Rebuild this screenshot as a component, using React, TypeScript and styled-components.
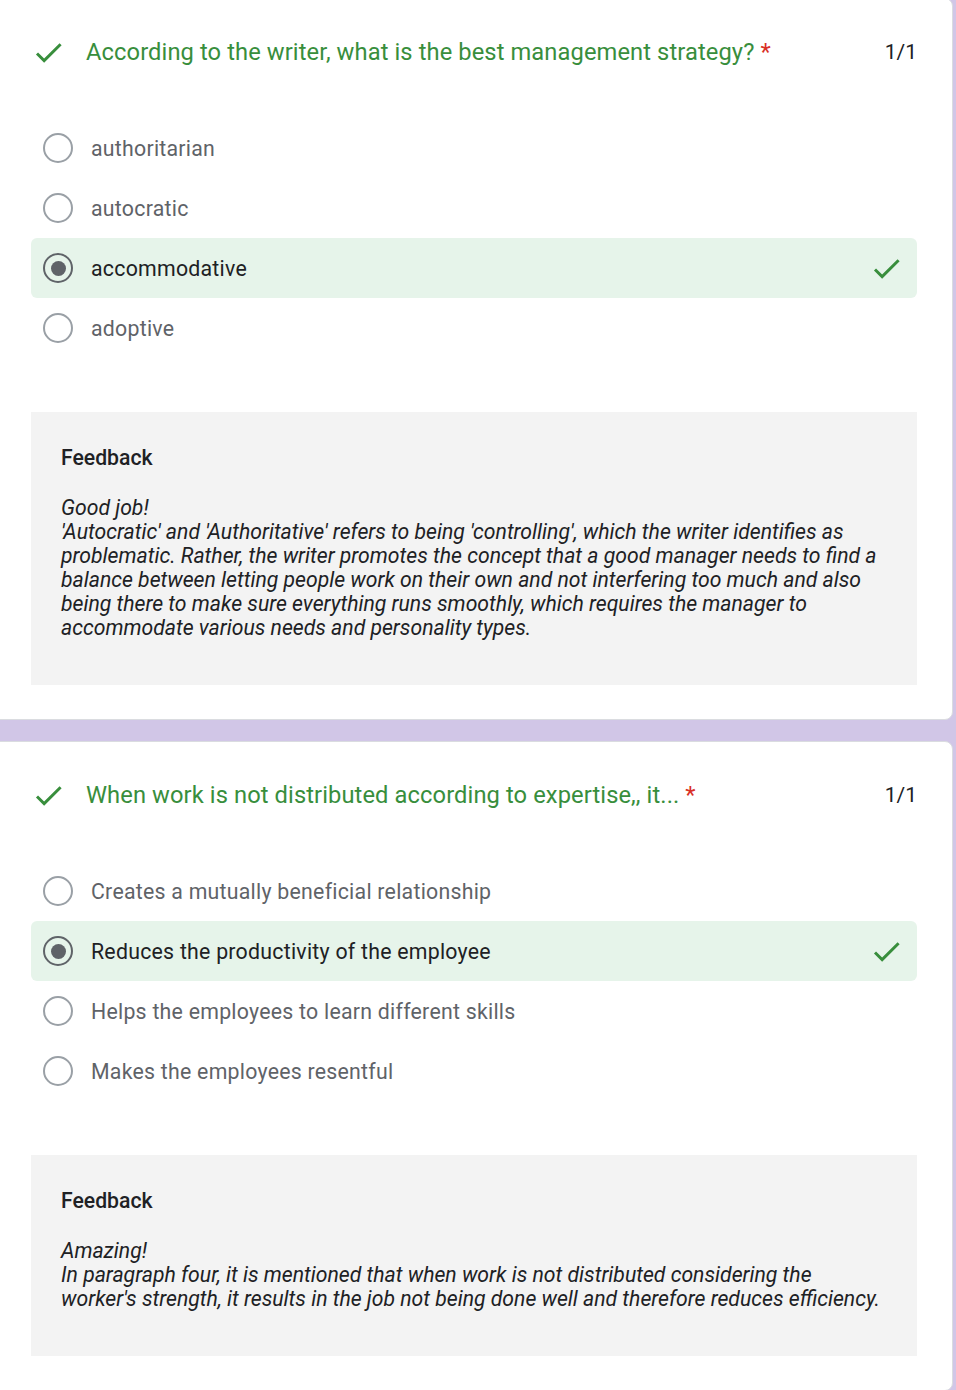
import React from 'react';
import styled, { createGlobalStyle } from 'styled-components';

const GlobalStyle = createGlobalStyle`
  html, body { margin: 0; padding: 0; background: #d1c6e7; }
  body {
    font-family: Roboto, "Noto Sans", Arial, sans-serif;
    -webkit-font-smoothing: antialiased;
    overflow: hidden;
  }
`;

const Page = styled.main`
  display: flex;
  flex-direction: column;
  gap: 21px;
  padding-right: 3px;
  margin-top: -2px;
`;

const Card = styled.section`
  background: #ffffff;
  border: 1px solid #dadce0;
  border-radius: 8px;
  margin-left: -12px;
  padding: 39px 35px 34px 42px;
  display: flex;
  flex-direction: column;
`;

const TitleRow = styled.div`
  display: flex;
  align-items: center;
  height: 28px;
  gap: 20px;
`;

const Title = styled.h2`
  flex: 1;
  margin: 0;
  font-size: 23.7px;
  font-weight: 400;
  line-height: 28px;
  color: #388e3c;
  letter-spacing: 0.1px;
`;

const Required = styled.span`
  color: #d93025;
  margin-left: 6px;
`;

const Points = styled.span`
  font-size: 21px;
  color: #202124;
  line-height: 28px;
`;

const Options = styled.div`
  display: flex;
  flex-direction: column;
  margin-top: 52px;
`;

const OptionRow = styled.label<{ $correct?: boolean }>`
  display: flex;
  align-items: center;
  height: 60px;
  padding: 0 13px 0 12px;
  gap: 18px;
  border-radius: 6px;
  background: ${(p) => (p.$correct ? '#e6f4ea' : 'transparent')};
`;

const Radio = styled.span<{ $checked?: boolean }>`
  flex: none;
  width: 30px;
  height: 30px;
  box-sizing: border-box;
  border-radius: 50%;
  border: 2.5px solid ${(p) => (p.$checked ? '#5f6368' : '#9aa0a6')};
  display: flex;
  align-items: center;
  justify-content: center;
  &::after {
    content: '';
    display: ${(p) => (p.$checked ? 'block' : 'none')};
    width: 15px;
    height: 15px;
    border-radius: 50%;
    background: #5f6368;
  }
`;

const OptionText = styled.span<{ $checked?: boolean }>`
  flex: 1;
  font-size: 21.3px;
  letter-spacing: 0.25px;
  color: ${(p) => (p.$checked ? '#202124' : '#5f6368')};
`;

const Feedback = styled.div`
  margin-top: 54px;
  background: #f3f3f3;
  padding: 34px 30px 45px 30px;
  display: flex;
  flex-direction: column;
  gap: 26px;
`;

const FeedbackTitle = styled.div`
  font-size: 21.2px;
  font-weight: 500;
  line-height: 24px;
  color: #202124;
`;

const FeedbackBody = styled.div`
  font-size: 21.2px;
  font-style: italic;
  line-height: 24px;
  color: #202124;
  white-space: nowrap;
`;

const CheckIcon = () => (
  <svg width="35" height="35" viewBox="0 0 24 24" fill="#388e3c" style={{ flex: 'none' }}>
    <path d="M9 16.17L4.83 12l-1.42 1.41L9 19 21 7l-1.41-1.41z" />
  </svg>
);

type Q = {
  title: string;
  options: string[];
  chosen: number;
  feedback: string[];
};

const questions: Q[] = [
  {
    title: 'According to the writer, what is the best management strategy?',
    options: ['authoritarian', 'autocratic', 'accommodative', 'adoptive'],
    chosen: 2,
    feedback: [
      'Good job!',
      "'Autocratic' and 'Authoritative' refers to being 'controlling', which the writer identifies as",
      'problematic. Rather, the writer promotes the concept that a good manager needs to find a',
      'balance between letting people work on their own and not interfering too much and also',
      'being there to make sure everything runs smoothly, which requires the manager to',
      'accommodate various needs and personality types.',
    ],
  },
  {
    title: 'When work is not distributed according to expertise,, it...',
    options: [
      'Creates a mutually beneficial relationship',
      'Reduces the productivity of the employee',
      'Helps the employees to learn different skills',
      'Makes the employees resentful',
    ],
    chosen: 1,
    feedback: [
      'Amazing!',
      'In paragraph four, it is mentioned that when work is not distributed considering the',
      "worker's strength, it results in the job not being done well and therefore reduces efficiency.",
    ],
  },
];

export default function App() {
  return (
    <>
      <GlobalStyle />
      <Page>
        {questions.map((q, qi) => (
          <Card key={qi}>
            <TitleRow>
              <CheckIcon />
              <Title>
                {q.title}
                <Required>*</Required>
              </Title>
              <Points>1/1</Points>
            </TitleRow>
            <Options>
              {q.options.map((o, oi) => {
                const checked = oi === q.chosen;
                return (
                  <OptionRow key={oi} $correct={checked}>
                    <Radio $checked={checked} />
                    <OptionText $checked={checked}>{o}</OptionText>
                    {checked && <CheckIcon />}
                  </OptionRow>
                );
              })}
            </Options>
            <Feedback>
              <FeedbackTitle>Feedback</FeedbackTitle>
              <FeedbackBody>
                {q.feedback.map((line, li) => (
                  <React.Fragment key={li}>
                    {line}
                    {li < q.feedback.length - 1 && <br />}
                  </React.Fragment>
                ))}
              </FeedbackBody>
            </Feedback>
          </Card>
        ))}
      </Page>
    </>
  );
}
